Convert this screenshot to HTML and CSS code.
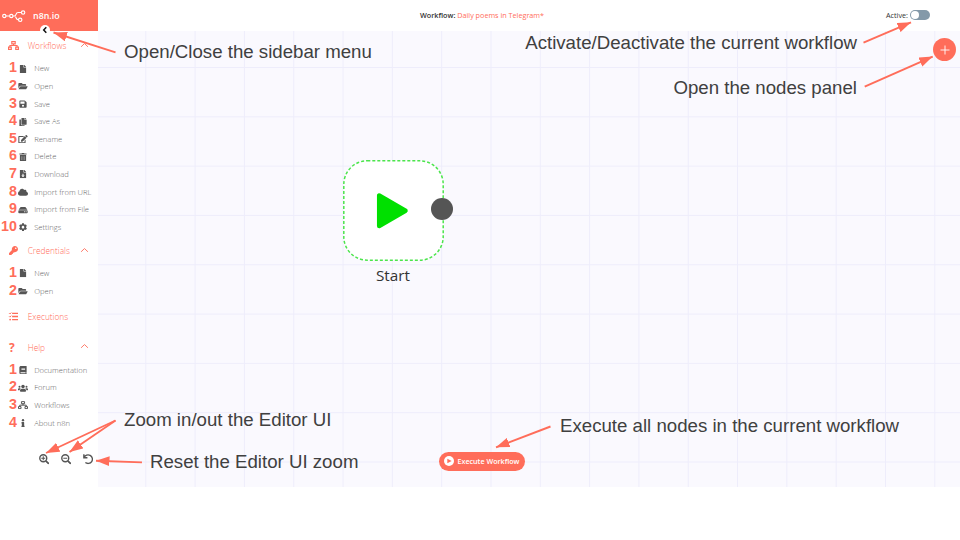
FILE: index.html
```
<!DOCTYPE html>
<html lang="en">
<head>
<meta charset="utf-8">
<title>n8n.io - Daily poems in Telegram</title>
<link rel="stylesheet" href="styles.css">
</head>
<body>
<svg class="defs" aria-hidden="true">
  <defs>
    <symbol id="file" viewBox="0 0 384 512"><path d="M224 136V0H24C10.700 0 0 10.700 0 24v464c0 13.300 10.700 24 24 24h336c13.300 0 24-10.700 24-24V160H248c-13.200 0-24-10.800-24-24zm160-14.100v6.100H256V0h6.100c6.400 0 12.500 2.500 17 7l97.900 98c4.500 4.500 7 10.600 7 16.900z"/></symbol>
    <symbol id="folder" viewBox="0 0 576 512"><path d="M572.694 292.093L500.270 416.248A63.997 63.997 0 0 1 444.989 448H45.025c-18.523 0-30.064-20.093-20.731-36.093l72.424-124.155A64 64 0 0 1 152 256h399.964c18.523 0 30.064 20.093 20.730 36.093zM152 224h328v-48c0-26.510-21.490-48-48-48H272l-64-64H48C21.490 64 0 85.490 0 112v278.046l69.077-118.418C86.214 242.250 117.989 224 152 224z"/></symbol>
    <symbol id="save" viewBox="0 0 448 512"><path fill-rule="evenodd" d="M433.900 129.900l-83.900-83.900A48 48 0 0 0 316.100 32H48C21.500 32 0 53.500 0 80v352c0 26.500 21.500 48 48 48h352c26.500 0 48-21.500 48-48V163.900a48 48 0 0 0-14.100-34zM224 416a64 64 0 1 1 0-128 64 64 0 0 1 0 128zM64 96h256v128H64z"/></symbol>
    <symbol id="copy" viewBox="0 0 448 512"><path d="M320 448v40c0 13.255-10.745 24-24 24H24c-13.255 0-24-10.745-24-24V120c0-13.255 10.745-24 24-24h72v296c0 30.879 25.121 56 56 56h168zm0-344V0H152c-13.255 0-24 10.745-24 24v368c0 13.255 10.745 24 24 24h272c13.255 0 24-10.745 24-24V128H344c-13.200 0-24-10.800-24-24zm120.971-31.029L375.029 7.029A24 24 0 0 0 358.059 0H352v96h96v-6.059a24 24 0 0 0-7.029-16.970z"/></symbol>
    <symbol id="edit" viewBox="0 0 576 512"><path d="M402.600 83.200l90.200 90.200c3.800 3.800 3.800 10 0 13.800L274.400 405.600l-92.800 10.300c-12.400 1.400-22.900-9.100-21.500-21.500l10.300-92.800L388.800 83.200c3.800-3.800 10-3.800 13.800 0zm162-22.900l-48.800-48.800c-15.200-15.200-39.900-15.200-55.200 0l-35.400 35.400c-3.800 3.800-3.800 10 0 13.800l90.200 90.200c3.800 3.800 10 3.800 13.800 0l35.400-35.400c15.200-15.300 15.200-40 0-55.200zM384 346.200V448H64V128h229.800c3.200 0 6.200-1.300 8.500-3.500l40-40c7.600-7.600 2.200-20.500-8.500-20.500H48C21.500 64 0 85.500 0 112v352c0 26.500 21.500 48 48 48h352c26.500 0 48-21.500 48-48V306.200c0-10.700-12.900-16-20.500-8.500l-40 40c-2.200 2.300-3.500 5.300-3.500 8.500z"/></symbol>
    <symbol id="trash" viewBox="0 0 448 512"><path fill-rule="evenodd" d="M32 464a48 48 0 0 0 48 48h288a48 48 0 0 0 48-48V128H32zM312 208a8 8 0 0 1 16 0v224a8 8 0 0 1-16 0zM216 208a8 8 0 0 1 16 0v224a8 8 0 0 1-16 0zM120 208a8 8 0 0 1 16 0v224a8 8 0 0 1-16 0zM432 32H312l-9.400-18.700A24 24 0 0 0 281.100 0H166.800a24 24 0 0 0-21.400 13.300L136 32H16A16 16 0 0 0 0 48v32a16 16 0 0 0 16 16h416a16 16 0 0 0 16-16V48a16 16 0 0 0-16-16z"/></symbol>
    <symbol id="download" viewBox="0 0 384 512"><path fill-rule="evenodd" d="M224 136V0H24C10.700 0 0 10.700 0 24v464c0 13 11 24 24 24h336c13 0 24-11 24-24V160H248c-13 0-24-11-24-24zM160 224h64v112h75L192 448 85 336h75zM384 122v6H256V0h6l17 7 98 98z"/></symbol>
    <symbol id="cloud" viewBox="0 0 640 512"><path d="M537.600 226.600c4.100-10.700 6.400-22.400 6.400-34.600 0-53-43-96-96-96-19.700 0-38.100 6-53.300 16.200C367 64.200 315.300 32 256 32c-88.400 0-160 71.600-160 160 0 2.700.1 5.400.2 8.100C40.200 219.800 0 273.200 0 336c0 79.500 64.500 144 144 144h368c70.700 0 128-57.300 128-128 0-61.900-44-113.600-102.400-125.400z"/></symbol>
    <symbol id="drive" viewBox="0 0 576 512"><path fill-rule="evenodd" d="M576 304v96a48 48 0 0 1-48 48H48a48 48 0 0 1-48-48v-96a48 48 0 0 1 48-48h480a48 48 0 0 1 48 48zM528 224a80 80 0 0 1 30.800 6.200L462.300 85.400A48 48 0 0 0 422.300 64H153.700a48 48 0 0 0-40 21.400L17.200 230.200A80 80 0 0 1 48 224zM480 320a32 32 0 1 0 0 64 32 32 0 0 0 0-64zM384 320a32 32 0 1 0 0 64 32 32 0 0 0 0-64z"/></symbol>
    <symbol id="cog" viewBox="0 0 512 512"><path d="M487.400 315.700l-42.600-24.600c4.300-23.200 4.300-47 0-70.200l42.600-24.600c4.900-2.800 7.100-8.600 5.500-14-11.100-35.600-30-67.800-54.700-94.600-3.800-4.100-10-5.100-14.800-2.300L380.800 110c-17.900-15.400-38.500-27.300-60.800-35.100V25.800c0-5.600-3.900-10.500-9.400-11.700-36.700-8.200-74.300-7.800-109.200 0-5.500 1.200-9.400 6.100-9.400 11.700V75c-22.200 7.900-42.800 19.800-60.800 35.100L88.700 85.500c-4.900-2.800-11-1.900-14.800 2.300-24.700 26.700-43.600 58.900-54.700 94.600-1.700 5.400.6 11.200 5.500 14L67.300 221c-4.300 23.200-4.300 47 0 70.200l-42.600 24.600c-4.900 2.800-7.100 8.600-5.500 14 11.100 35.600 30 67.800 54.700 94.600 3.800 4.100 10 5.100 14.800 2.300l42.600-24.600c17.900 15.400 38.500 27.300 60.800 35.100v49.200c0 5.600 3.900 10.500 9.400 11.700 36.700 8.200 74.300 7.800 109.200 0 5.500-1.200 9.400-6.100 9.400-11.700v-49.200c22.200-7.900 42.800-19.800 60.800-35.100l42.600 24.600c4.900 2.800 11 1.900 14.800-2.300 24.700-26.700 43.600-58.900 54.700-94.600 1.500-5.500-.7-11.300-5.600-14.100zM256 336c-44.100 0-80-35.900-80-80s35.900-80 80-80 80 35.900 80 80-35.900 80-80 80z"/></symbol>
    <symbol id="key" viewBox="0 0 512 512"><path d="M512 176.001C512 273.203 433.202 352 336 352c-11.220 0-22.190-1.062-32.827-3.069l-24.012 27.014A23.999 23.999 0 0 1 261.223 384H224v40c0 13.255-10.745 24-24 24h-40v40c0 13.255-10.745 24-24 24H24c-13.255 0-24-10.745-24-24v-78.059c0-6.365 2.529-12.470 7.029-16.971l161.802-161.802C163.108 213.814 160 195.271 160 176 160 78.798 238.797.001 335.999 0 433.488-.001 512 78.511 512 176.001zM336 128c0 26.510 21.490 48 48 48s48-21.490 48-48-21.490-48-48-48-48 21.490-48 48z"/></symbol>
    <symbol id="network" viewBox="0 0 640 512"><path fill="none" stroke="currentColor" stroke-width="64" d="M220 32h200v132H220zM32 348h160v132H32zM448 348h160v132H448zM320 164v92M112 348v-92h416v92"/></symbol>
    <symbol id="tasks" viewBox="0 0 512 512"><path fill="none" stroke="currentColor" stroke-width="72" d="M176 80h336M176 256h336M176 432h336"/><path fill="none" stroke="currentColor" stroke-width="56" d="M8 72l42 42 78-82M8 248l42 42 78-82"/><circle cx="64" cy="432" r="50"/></symbol>
    <symbol id="book" viewBox="0 0 448 512"><path fill-rule="evenodd" d="M448 360V24c0-13-11-24-24-24H96C43 0 0 43 0 96v320c0 53 43 96 96 96h328c13 0 24-11 24-24v-16c0-8-4-14-9-18-4-15-4-59 0-75 5-4 9-11 9-19zM128 128h224v32H128zM128 192h224v32H128zM381 448H96a32 32 0 0 1 0-64h285c-2 17-2 47 0 64z"/></symbol>
    <symbol id="users" viewBox="0 0 640 512"><circle cx="96" cy="160" r="64"/><circle cx="544" cy="160" r="64"/><circle cx="320" cy="144" r="112"/><path d="M0 320q0-64 64-64h64q27 0 45 19-62 35-75 109H32q-32 0-32-32zM640 320q0-64-64-64h-64q-27 0-45 19 62 35 75 109h66q32 0 32-32zM243 288h154q115 0 115 115v29q0 48-48 48H176q-48 0-48-48v-29q0-115 115-115z"/></symbol>
    <symbol id="info" viewBox="0 0 192 512"><circle cx="96" cy="72" r="72"/><path d="M20 192h128q20 0 20 20v212h24v88H0v-88h24V280H0v-68q0-20 20-20z"/></symbol>
    <symbol id="zoom-in" viewBox="0 0 512 512"><g fill="none" stroke="currentColor"><circle cx="208" cy="208" r="170" stroke-width="68"/><path stroke-width="88" d="M332 332l152 152"/><path stroke-width="50" d="M112 208h192M208 112v192"/></g></symbol>
    <symbol id="zoom-out" viewBox="0 0 512 512"><g fill="none" stroke="currentColor"><circle cx="208" cy="208" r="170" stroke-width="68"/><path stroke-width="88" d="M332 332l152 152"/><path stroke-width="50" d="M112 208h192"/></g></symbol>
    <symbol id="undo" viewBox="0 0 512 512"><path fill="none" stroke="currentColor" stroke-width="68" d="M42 8v174h174M54 174A210 210 0 1 1 116 414"/></symbol>
    <symbol id="chevron" viewBox="0 0 10 6"><path fill="none" stroke="currentColor" stroke-width="1" d="M1.200 5L5 1.400 8.800 5"/></symbol>
  </defs>
</svg>

<div class="app">
  <aside class="sidebar">
    <div class="brand">
      <svg class="logo" viewBox="0 0 24 14"><g fill="none" stroke="#fff" stroke-width="1.150"><circle cx="2.300" cy="7" r="1.650"/><circle cx="9.300" cy="7" r="1.650"/><circle cx="21.100" cy="3.500" r="1.700"/><circle cx="18.200" cy="10.800" r="1.700"/><path d="M4 7h3.600M11 7h1.200c2.800 0 .8-3.500 4-3.500h3.200M12.200 7c2.800 0 .8 3.800 4.300 3.800"/></g></svg>
      <span>n8n.io</span>
      <span class="collapse"><svg viewBox="0 0 8 8"><path d="M5.300 1.300L2.700 4l2.600 2.700" fill="none" stroke="#111" stroke-width="1.500"/></svg></span>
    </div>
    <nav class="menu">
      <div class="head"><svg class="hicon"><use href="#network"/></svg><span>Workflows</span><svg class="chev"><use href="#chevron"/></svg></div>
      <div class="item"><b>1</b><svg><use href="#file"/></svg><span>New</span></div>
      <div class="item"><b>2</b><svg><use href="#folder"/></svg><span>Open</span></div>
      <div class="item"><b>3</b><svg><use href="#save"/></svg><span>Save</span></div>
      <div class="item"><b>4</b><svg><use href="#copy"/></svg><span>Save As</span></div>
      <div class="item"><b>5</b><svg><use href="#edit"/></svg><span>Rename</span></div>
      <div class="item"><b>6</b><svg><use href="#trash"/></svg><span>Delete</span></div>
      <div class="item"><b>7</b><svg><use href="#download"/></svg><span>Download</span></div>
      <div class="item"><b>8</b><svg><use href="#cloud"/></svg><span>Import from URL</span></div>
      <div class="item"><b>9</b><svg><use href="#drive"/></svg><span>Import from File</span></div>
      <div class="item"><b>10</b><svg><use href="#cog"/></svg><span>Settings</span></div>
      <div class="head"><svg class="hicon"><use href="#key"/></svg><span>Credentials</span><svg class="chev"><use href="#chevron"/></svg></div>
      <div class="item"><b>1</b><svg><use href="#file"/></svg><span>New</span></div>
      <div class="item"><b>2</b><svg><use href="#folder"/></svg><span>Open</span></div>
      <div class="head single"><svg class="hicon"><use href="#tasks"/></svg><span>Executions</span></div>
      <div class="head"><i class="hicon question">?</i><span>Help</span><svg class="chev"><use href="#chevron"/></svg></div>
      <div class="item"><b>1</b><svg><use href="#book"/></svg><span>Documentation</span></div>
      <div class="item"><b>2</b><svg><use href="#users"/></svg><span>Forum</span></div>
      <div class="item"><b>3</b><svg><use href="#network"/></svg><span>Workflows</span></div>
      <div class="item"><b>4</b><svg><use href="#info"/></svg><span>About n8n</span></div>
    </nav>
    <div class="zoom">
      <svg><use href="#zoom-in"/></svg><svg><use href="#zoom-out"/></svg><svg><use href="#undo"/></svg>
    </div>
  </aside>

  <div class="main">
    <header class="topbar">
      <div class="title">Workflow: <span>Daily poems in Telegram*</span></div>
      <div class="active">Active:<span class="switch"></span></div>
    </header>
    <main class="canvas">
      <div class="node">
        <svg class="box" viewBox="0 0 101 101"><rect x=".8" y=".8" width="99.400" height="99.400" rx="23.500" fill="#fff" stroke="#4ce54c" stroke-width="1.500" stroke-dasharray="3 2"/><path d="M36.200 35.500v30.500L62.500 50.700z" fill="#00e000" stroke="#00e000" stroke-width="4.500" stroke-linejoin="round"/></svg>
        <div class="name">Start</div>
        <div class="port"></div>
      </div>
      <button class="add"><svg viewBox="0 0 10 10"><path d="M5 .5v9M.5 5h9" stroke="#fff" stroke-width=".9"/></svg></button>
      <button class="execute"><svg viewBox="0 0 10 10"><circle cx="5" cy="5" r="5" fill="#fff"/><path d="M3.300 2.700v4.600L7.700 5z" fill="#ff6d5a"/></svg><span>Execute Workflow</span></button>
    </main>
  </div>
</div>

<div class="notes">
  <p class="n-sidebar">Open/Close the sidebar menu</p>
  <p class="n-active">Activate/Deactivate the current workflow</p>
  <p class="n-panel">Open the nodes panel</p>
  <p class="n-zoom">Zoom in/out the Editor UI</p>
  <p class="n-reset">Reset the Editor UI zoom</p>
  <p class="n-execute">Execute all nodes in the current workflow</p>
  <svg class="arrows" viewBox="0 0 960 540">
    <defs><marker id="tip" markerUnits="userSpaceOnUse" markerWidth="15" markerHeight="10" refX="13.500" refY="4.900" orient="auto"><path d="M0 0L13.500 4.900 0 9.800z" fill="#ff6d5a"/></marker></defs>
    <g fill="none" stroke="#ff6d5a" stroke-width="1.900">
      <path marker-end="url(#tip)" d="M115.500 52.300L53.500 32.500"/>
      <path marker-end="url(#tip)" d="M863.500 42.700L911 22.300"/>
      <path marker-end="url(#tip)" d="M864.700 86.600L932.700 56.600"/>
      <path marker-end="url(#tip)" d="M115.500 420.500L46 453"/>
      <path marker-end="url(#tip)" d="M115.500 420.500L69.500 452"/>
      <path marker-end="url(#tip)" d="M142 462.400L96 460.700"/>
      <path marker-end="url(#tip)" d="M550.500 426.500L496 447.300"/>
    </g>
  </svg>
</div>
</body>
</html>
```
FILE: styles.css
```
* { box-sizing: border-box; }
body { margin: 0; width: 960px; height: 540px; overflow: hidden; background: #fff; font-family: "Open Sans", sans-serif; }
.defs { position: absolute; width: 0; height: 0; }
svg { display: block; fill: currentColor; }
.app { display: flex; height: 487px; }

.sidebar { width: 98.400px; flex: none; background: #fff; }
.brand { position: relative; height: 31px; background: #ff6d5a; color: #fff; display: flex; align-items: center; gap: 7px; padding-left: 2px; font-size: 8.900px; font-weight: 600; }
.logo { width: 24px; height: 14px; }
.collapse { position: absolute; left: 40px; top: 25px; width: 10px; height: 10px; border-radius: 50%; background: #fff; padding: 1px; }
.collapse svg { width: 8px; height: 8px; }

.menu { height: 401px; white-space: nowrap; }
.head { height: 28.500px; display: flex; align-items: center; padding: 1px 9.400px 0 8px; color: #ff6d5a; font-size: 8.300px; font-weight: 300; }
.head span { flex: 1; }
.hicon { width: 11px; height: 9px; margin-right: 8.700px; }
.question { font: bold 12px/9px "Open Sans", sans-serif; padding-left: 1px; }
.chev { width: 9px; height: 6px; margin-top: -2px; }
.single { margin: 2.300px 0 2.100px; }
.item { height: 17.640px; display: flex; align-items: center; color: #666; font-size: 7.600px; font-weight: 300; }
.item b { width: 17px; text-align: right; font: bold 14.300px/17px "Liberation Sans", sans-serif; color: #ff6d5a; margin-top: -1px; }
.item svg { width: 10px; height: 8.300px; margin: 1px 6.400px 0 .8px; color: #555; }
.zoom { display: flex; gap: 12px; padding: 22.200px 0 0 38.600px; color: #555; }
.zoom svg { width: 10.500px; height: 10.500px; margin-right: -.5px; }

.main { flex: 1; display: flex; flex-direction: column; }
.topbar { height: 31px; flex: none; display: flex; align-items: center; justify-content: space-between; font-size: 7.220px; color: #333; padding: 0 30px 1px 321.600px; }
.title { font-weight: 600; }
.title span { color: #ff6d5a; font-weight: 400; }
.active { display: flex; align-items: center; gap: 2px; }
.switch { width: 20px; height: 10px; border-radius: 5px; background: #8499a9; padding: 1px; }
.switch::after { content: ""; display: block; width: 8px; height: 8px; border-radius: 50%; background: #fff; }

.canvas { position: relative; flex: 1; background-color: #faf9fe; background-image: linear-gradient(90deg, #eeedfb 1px, transparent 1px), linear-gradient(#eeedfb 1px, transparent 1px); background-size: 49.320px 49.320px; background-position: 47.300px 36px; }
.node { position: absolute; left: 245.100px; top: 129px; width: 101px; }
.box { width: 101px; height: 101px; }
.name { text-align: center; font-size: 15.300px; line-height: 20px; margin: 4px 2px 0 0; color: #333; }
.port { position: absolute; left: 88px; top: 38px; width: 22px; height: 22px; border-radius: 50%; background: #555; }
button { border: 0; background: #ff6d5a; color: #fff; padding: 0; font-family: inherit; }
.add { position: absolute; right: 4px; top: 7px; width: 23px; height: 23px; border-radius: 50%; display: flex; align-items: center; justify-content: center; }
.add svg { width: 10px; height: 10px; }
.execute { position: absolute; left: 340.600px; top: 420.500px; width: 86px; height: 19.500px; border-radius: 10px; display: flex; align-items: center; justify-content: center; gap: 4px; padding-right: 1px; font-size: 7.150px; font-weight: 600; white-space: nowrap; }
.execute svg { width: 10px; height: 10px; }

.notes { position: absolute; inset: 0; pointer-events: none; color: #404040; font: 18.660px/22px "Liberation Sans", sans-serif; white-space: nowrap; }
.notes p { position: absolute; margin: 0; }
.arrows { position: absolute; inset: 0; width: 960px; height: 540px; }
.n-sidebar { left: 124px; top: 41px; }
.n-active { right: 103px; top: 32px; }
.n-panel { right: 103px; top: 77px; }
.n-zoom { left: 124px; top: 409px; }
.n-reset { left: 150px; top: 451px; }
.n-execute { left: 560px; top: 415px; }
```
